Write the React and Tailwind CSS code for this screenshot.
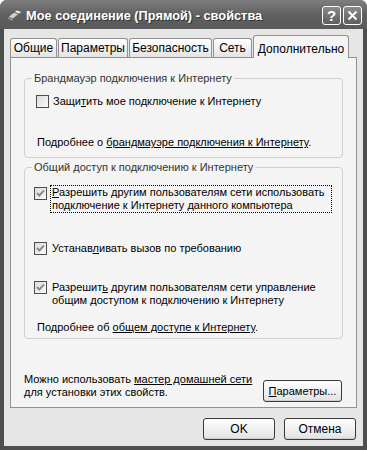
import React from "react";

const font = { fontFamily: '"Liberation Sans", Arial, sans-serif' };

function Check({ checked }) {
  return (
    <span className="relative inline-flex w-[13px] h-[13px] shrink-0 border border-[#4d4d4d] bg-gradient-to-br from-[#dcdcdc] to-[#fbfbfb]">
      {checked && (
        <svg width="11" height="11" viewBox="0 0 11 11" className="absolute left-0 top-0">
          <path d="M2 5 L4.3 7.5 L9 2.5" stroke="#8c8c8c" strokeWidth="2" fill="none" />
        </svg>
      )}
    </span>
  );
}

function Tab({ label, w, active }) {
  if (active) {
    return (
      <div
        className={`relative z-10 ${w} h-[23px] -mb-[1px] border border-b-0 border-[#919191] rounded-t-[3px] bg-[#f4f4f4] flex items-start justify-center pt-[4px] text-[12px] text-black whitespace-nowrap`}
      >
        {label}
      </div>
    );
  }
  return (
    <div
      className={`${w} h-[19px] border border-b-0 border-[#919191] rounded-t-[3px] bg-gradient-to-b from-[#ffffff] to-[#e4e4e4] flex items-center justify-center text-[12px] text-black whitespace-nowrap`}
    >
      {label}
    </div>
  );
}

function Btn({ children, w }) {
  return (
    <div
      className={`${w} h-[22px] rounded-[3px] border border-[#3a3a3a] bg-gradient-to-b from-[#ffffff] to-[#e2e2e2] flex items-center justify-center text-[12px] text-black shadow-[inset_0_-1px_0_#cfcfcf] whitespace-nowrap`}
    >
      {children}
    </div>
  );
}

export default function App() {
  return (
    <div className="w-[367px] h-[450px] bg-[#ffffff]" style={font}>
      <div className="w-[367px] h-[450px] flex flex-col bg-[#4f4f4f] rounded-t-[7px] overflow-hidden">
        {/* Title bar */}
        <div className="h-[29px] shrink-0 flex items-center bg-gradient-to-b from-[#7e7e7e] via-[#606060] to-[#5a5a5a] pl-[7px] pr-[5px]">
          <svg width="17" height="14" viewBox="0 0 17 14" className="shrink-0 mt-[2px]">
            <path d="M1 8 L7 3 L12 5 L6 10 Z" fill="#cfcfcf" stroke="#4a4a4a" strokeWidth="0.8" />
            <path d="M7 3 L12 5 L15 3 L10 1 Z" fill="#efefef" stroke="#4a4a4a" strokeWidth="0.6" />
            <path d="M1 8 L6 10 L6 12 L1 10 Z" fill="#8f8f8f" />
          </svg>
          <span className="ml-[2px] mt-[3px] text-[12.8px] font-bold text-white [text-shadow:1px_1px_0_#333] whitespace-nowrap">
            Мое соединение (Прямой) - свойства
          </span>
          <div className="ml-auto flex gap-[2px] mt-[2px]">
            <div className="w-[19px] h-[19px] rounded-[3px] border border-white bg-gradient-to-b from-[#8a8a8a] to-[#5e5e5e] flex items-center justify-center text-white font-bold text-[15px] leading-none">
              ?
            </div>
            <div className="w-[19px] h-[19px] rounded-[3px] border border-white bg-gradient-to-b from-[#8a8a8a] to-[#5e5e5e] flex items-center justify-center">
              <svg width="11" height="11" viewBox="0 0 11 11">
                <path d="M1.5 1.5 L9.5 9.5 M9.5 1.5 L1.5 9.5" stroke="white" strokeWidth="2" />
              </svg>
            </div>
          </div>
        </div>

        {/* Body */}
        <div className="flex-1 mx-[4px] mb-[4px] bg-[#e6e6e6] px-[6px] pt-[6px] flex flex-col">
          {/* Tabs */}
          <div className="flex items-end gap-[1px] h-[22px]">
            <Tab label="Общие" w="w-[47px]" />
            <Tab label="Параметры" w="w-[70px]" />
            <Tab label="Безопасность" w="w-[83px]" />
            <Tab label="Сеть" w="w-[39px]" />
            <Tab label="Дополнительно" w="w-[96px]" active />
          </div>

          {/* Panel */}
          <div className="h-[351px] border border-[#919191] bg-[#f4f4f4] px-[13px] pt-[14px] flex flex-col text-[11px] leading-[13px] text-black whitespace-nowrap">
            <fieldset className="border border-[#cfcfcf] rounded-[4px] h-[86px] px-[11px]">
              <legend className="ml-[-4px] px-[2px] text-[11px] text-[#333]">
                Брандмауэр подключения к Интернету
              </legend>
              <div className="flex items-center gap-[4px] mt-[10px]">
                <Check />
                <span>
                  Защи<u>т</u>ить мое подключение к Интернету
                </span>
              </div>
              <div className="mt-[28px] ml-[1px]">
                Подробнее о <u>брандмауэре подключения к Интернету</u>.
              </div>
            </fieldset>

            <fieldset className="mt-[3px] border border-[#cfcfcf] rounded-[4px] h-[178px] px-[9px]">
              <legend className="ml-[-2px] px-[2px] text-[11px] text-[#333]">
                Общий доступ к подключению к Интернету
              </legend>
              <div className="flex items-start gap-[3px] mt-[11px]">
                <span className="mt-[2px]">
                  <Check checked />
                </span>
                <span className="border border-dotted border-black px-[1px] w-[282px]">
                  <u>Р</u>азрешить другим пользователям сети использовать
                  <br />
                  подключение к Интернету данного компьютера
                </span>
              </div>
              <div className="flex items-start gap-[4px] mt-[29px]">
                <Check checked />
                <span className="pl-[1px]">
                  Устанав<u>л</u>ивать вызов по требованию
                </span>
              </div>
              <div className="flex items-start gap-[4px] mt-[26px]">
                <Check checked />
                <span className="pl-[1px]">
                  Разрешит<u>ь</u> другим пользователям сети управление
                  <br />
                  общим доступом к подключению к Интернету
                </span>
              </div>
              <div className="mt-[14px] ml-[3px]">
                Подробнее об <u>общем доступе к Интернету</u>.
              </div>
            </fieldset>

            <div className="mt-auto mb-[5px] flex items-end justify-between">
              <div className="leading-[13px] mb-[3px]">
                Можно использовать <u>мастер домашней сети</u>
                <br />
                для установки этих свойств.
              </div>
              <Btn w="w-[79px] mr-[1px]">
                <span className="text-[11px]">
                  <u>П</u>араметры...
                </span>
              </Btn>
            </div>
          </div>

          {/* Bottom buttons */}
          <div className="flex justify-end gap-[9px] mt-[10px] pr-[1px]">
            <Btn w="w-[72px]">OK</Btn>
            <Btn w="w-[72px]">Отмена</Btn>
          </div>
        </div>
      </div>
    </div>
  );
}
